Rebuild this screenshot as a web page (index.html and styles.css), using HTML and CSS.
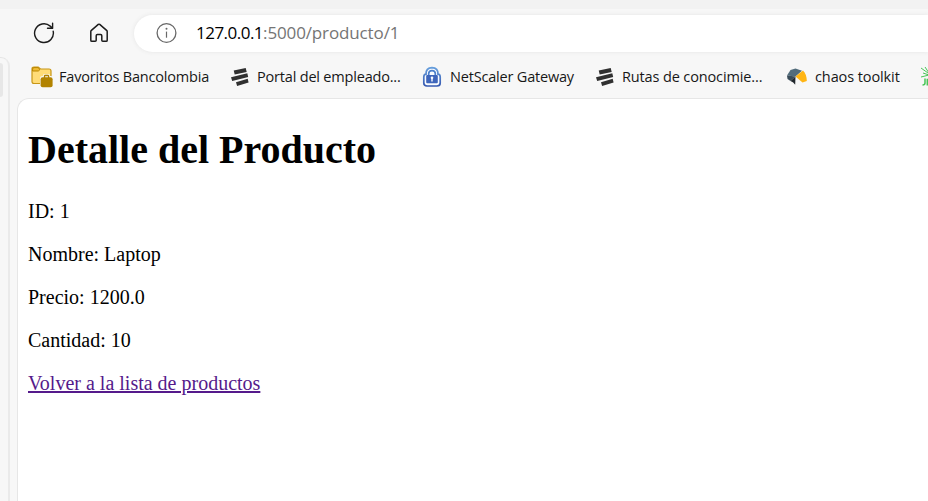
FILE: index.html
```html
<!DOCTYPE html>
<html lang="es">
<head>
<meta charset="utf-8">
<title>Detalle del Producto</title>
<link rel="stylesheet" href="styles.css">
</head>
<body>
<div class="browser">
  <div class="tabstrip"></div>
  <header class="toolbar">
    <svg class="reload" width="22" height="22" viewBox="0 0 22 22" fill="none" stroke="#1c1c1c" stroke-width="1.4" stroke-linecap="round" stroke-linejoin="round"><path d="M20.2 9.3A9.4 9.4 0 1 1 17.2 4.1L19.6 6.3M19.6 1.2V6.3H14.5"/></svg>
    <svg class="home" width="20" height="20" viewBox="0 0 20 20" fill="none" stroke="#1c1c1c" stroke-width="1.5" stroke-linejoin="round"><path d="M1.8 8.6 Q1.8 7.9 2.4 7.4L9.3 1.4Q10 .9 10.7 1.4L17.6 7.4Q18.2 7.9 18.2 8.6V17.2Q18.2 18.3 17.1 18.3H13.8Q12.8 18.3 12.8 17.3V12.8Q12.8 11.6 11.6 11.6H8.4Q7.2 11.6 7.2 12.8V17.3Q7.2 18.3 6.2 18.3H2.9Q1.8 18.3 1.8 17.2Z"/></svg>
    <div class="address">
      <svg class="info" width="22" height="22" viewBox="0 0 22 22"><circle cx="10.5" cy="11" r="9.4" fill="none" stroke="#686868" stroke-width="1.3"/><path d="M10.5 9.6V15.7" stroke="#686868" stroke-width="1.2"/><circle cx="10.5" cy="6.7" r="1" fill="#686868"/></svg>
      <span class="url"><span class="host">127.0.0.1</span>:5000/producto/1</span>
    </div>
  </header>
  <div class="workspace">
    <aside class="rail"><div class="rail-tab"></div></aside>
    <div class="main">
      <nav class="bookmarks">
        <a class="bookmark favorites"><svg width="22" height="22" viewBox="0 0 22 22"><path d="M1 3Q1 1 3 1H7.2L9.5 3H18Q20 3 20 5V15.5Q20 17.5 18 17.5H3Q1 17.5 1 15.5Z" fill="#ffdc78" stroke="#c79616" stroke-width="1.2"/><path d="M1.6 5V3Q1.6 1.6 3 1.6H7L9 3.5L7.3 5Z" fill="#f0bc37" stroke="#b98500"/><path d="M9 12.3Q9 10 11.5 10H12.3V8.2H18.7V10H20Q22 10 22 12.3V22H9Z" fill="#f7f7f7"/><path d="M13.5 12V10.3Q13.5 9.5 14.3 9.5H16.8Q17.6 9.5 17.6 10.3V12" fill="none" stroke="#b08000" stroke-width="1.3"/><rect x="9.6" y="11.2" width="12" height="10" rx="2" fill="#b28300"/></svg><span>Favoritos Bancolombia</span></a>
        <a class="bookmark portal"><svg width="20" height="20" viewBox="0 0 20 20" fill="#303030"><path d="M3.7 3.5 15.7 1 16.7 4.9 4.7 7.6ZM1 10.3 17.3 6.3 18.2 10 2.2 14ZM6 15.2 17.7 11.7 18.6 15.6 7.1 19Z"/></svg><span>Portal del empleado...</span></a>
        <a class="bookmark gateway"><svg width="20" height="22" viewBox="0 0 20 22" fill="none"><defs><linearGradient id="lock" x1="0" y1="0" x2="0" y2="1"><stop stop-color="#669edc"/><stop offset="1" stop-color="#3558b0"/></linearGradient></defs><path d="M4 8.2Q3.8 2 10 1.7Q16.2 2 16 8.2Q18.2 8.4 18.2 11V17Q18.2 20 15 20H5Q1.8 20 1.8 17V11Q1.8 8.4 4 8.2Z" fill="#f8fbff" stroke="url(#lock)" stroke-width="1.7"/><path d="M6.7 9.3V7.5Q6.7 4.7 10 4.7T13.3 7.5V9.3" stroke="#4b80cc" stroke-width="1.7"/><rect x="4.2" y="9" width="11.6" height="8.3" rx="1" fill="#3e65bb"/><path d="M10 11V15.5" stroke="#f8fbff" stroke-width="1.4"/><circle cx="10" cy="11.8" r="1.3" fill="#f8fbff"/></svg><span>NetScaler Gateway</span></a>
        <a class="bookmark routes"><svg width="20" height="20" viewBox="0 0 20 20" fill="#303030"><path d="M3.7 3.5 15.7 1 16.7 4.9 4.7 7.6ZM1 10.3 17.3 6.3 18.2 10 2.2 14ZM6 15.2 17.7 11.7 18.6 15.6 7.1 19Z"/></svg><span>Rutas de conocimie...</span></a>
        <a class="bookmark chaos"><svg width="22" height="20" viewBox="0 0 22 20"><path d="M1 8.5 4.5 3 9.5 1.5 16 3.7 9.5 9.4Z" fill="#526c7b"/><path d="M1 8.5 9.5 9.4 4.5 14 1.5 12Z" fill="#394c59"/><path d="M4.5 14 9.5 9.4 9.2 17.8 7.2 15.6Z" fill="#20272d"/><path d="M9.5 9.4 17 3.6Q20.6 7 20.8 14L16.5 15.5Z" fill="#ffb514"/></svg><span>chaos toolkit</span></a>
        <a class="bookmark jfrog"><svg width="20" height="20" viewBox="0 0 20 20" fill="none" stroke="#49c557" stroke-width="1"><path d="M1 1 8 6M5 0 9 6M3 6 9 8M1 10 9 8M10 3V9M12 2 10 7"/><path d="M5 11.5V16Q5 18 2.5 18M7.3 18.5V12.5H11M7.3 15H10" stroke-width="1.5"/></svg></a>
      </nav>
      <main class="page">
        <h1>Detalle del Producto</h1>
        <p>ID: 1</p>
        <p>Nombre: Laptop</p>
        <p>Precio: 1200.0</p>
        <p>Cantidad: 10</p>
        <a class="back" href="#">Volver a la lista de productos</a>
      </main>
    </div>
  </div>
</div>
</body>
</html>
```
FILE: styles.css
```css
* { box-sizing: border-box; }
body { margin: 0; overflow: hidden; background: #f7f7f7; }
.browser { display: flex; flex-direction: column; width: 928px; height: 501px; overflow: hidden; font-family: "Open Sans", "Noto Sans", sans-serif; }
.tabstrip { flex: 0 0 9px; background: #f2f2f2; }
.toolbar { display: flex; flex: 0 0 48px; align-items: center; padding-left: 33px; }
.reload { margin-right: 34px; }
.home { margin-right: 25px; }
.address { display: flex; flex: 1; align-items: center; height: 37px; padding-left: 22px; border-radius: 19px 0 0 19px; background: #fff; box-shadow: 0 0 4px #e5e5e5; }
.info { margin-right: 18px; }
.url { color: #757575; font-size: 17px; line-height: 24px; letter-spacing: -0.13px; white-space: nowrap; }
.host { color: #000; letter-spacing: -0.52px; }
.workspace { display: flex; flex: 1; min-height: 0; }
.rail { flex: 0 0 10px; padding-top: 5px; border-right: 2px solid #eaeaea; border-top: 1px solid #e5e5e5; border-radius: 0 9px 0 0; }
.rail-tab { width: 3px; height: 34px; border-radius: 0 3px 3px 0; background: #e7e7e7; }
.main { display: flex; flex: 1; min-width: 0; flex-direction: column; padding-left: 7px; }
.bookmarks { display: flex; flex: 0 0 41px; overflow: hidden; }
.bookmark { display: flex; flex: none; align-items: center; height: 40px; color: #171717; font-size: 14.5px; letter-spacing: -0.19px; white-space: nowrap; }
.bookmark svg { flex: none; }
.bookmark span { padding-bottom: 2px; }
.favorites { width: 199px; padding-left: 14px; gap: 6px; }
.portal { width: 189px; padding-left: 14px; gap: 7px; }
.gateway { width: 175px; padding-left: 17px; gap: 8px; }
.routes { width: 191px; padding-left: 15px; gap: 7px; letter-spacing: -0.13px; }
.chaos { width: 133px; padding-left: 15px; gap: 7px; letter-spacing: -0.1px; }
.jfrog { padding-left: 16px; }
.page { flex: 1; padding: 1px 10px 0; border: solid #e6e6e6; border-width: 1px 0 0 1px; border-radius: 12px 0 0 0; background: #fff; color: #000; font: 20px "Liberation Serif", serif; }
.page h1 { margin: 27px 0; font-size: 40px; line-height: 46px; }
.page p { margin: 0 0 20px; line-height: 23px; }
.back { color: #551a8b; line-height: 23px; text-decoration-thickness: 2px; }
```
